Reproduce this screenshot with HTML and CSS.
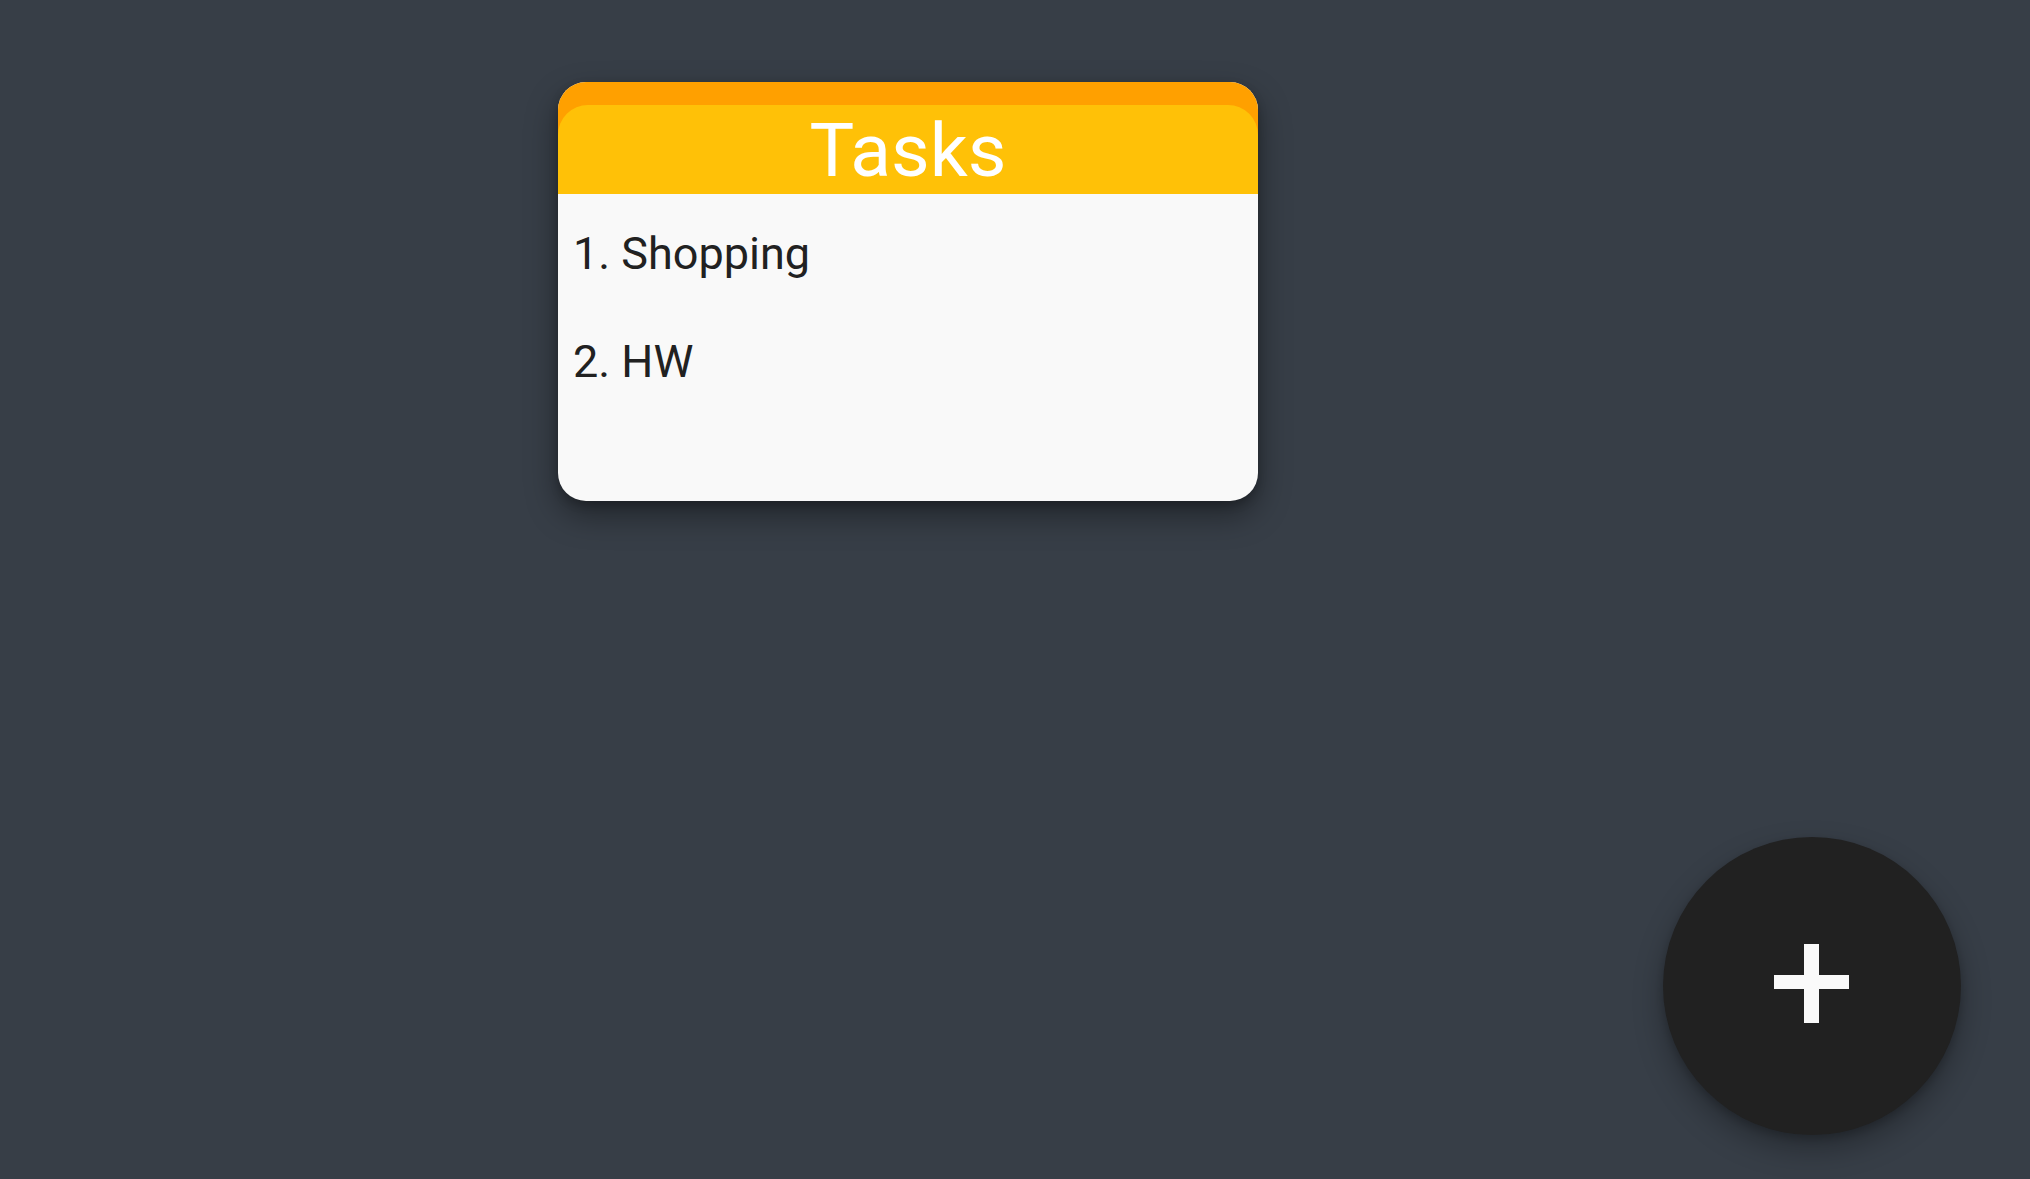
FILE: index.html
```html
<!DOCTYPE html>
<html lang="en">
<head>
<meta charset="utf-8">
<title>Tasks</title>
<link rel="stylesheet" href="styles.css">
</head>
<body>
<main class="board">
  <section class="card">
    <header class="card-header">
      <div class="card-title-bar">
        <h1 class="card-title">Tasks</h1>
      </div>
    </header>
    <ul class="task-list">
      <li class="task-item">1. Shopping</li>
      <li class="task-item">2. HW</li>
    </ul>
  </section>
</main>
<button class="fab" type="button" aria-label="Add">
  <svg class="fab-icon" width="75" height="79" viewBox="0 0 75 79" aria-hidden="true">
    <rect x="0" y="31" width="75" height="14" fill="#fafafa"/>
    <rect x="30" y="0" width="15" height="79" fill="#fafafa"/>
  </svg>
</button>
</body>
</html>
```
FILE: styles.css
```css
html, body {
  margin: 0;
  padding: 0;
  height: 100%;
}
body {
  background: #373e47;
  font-family: Roboto, "Liberation Sans", sans-serif;
  overflow: hidden;
}
.board {
  padding: 82px 0 0 558px;
}
.card {
  width: 700px;
  height: 419px;
  border-radius: 28px;
  overflow: hidden;
  background: #f9f9f9;
  box-shadow: 0 14px 32px rgba(0, 0, 0, 0.4), 0 4px 10px rgba(0, 0, 0, 0.2);
  display: flex;
  flex-direction: column;
}
.card-header {
  background: #ffa000;
  padding-top: 23px;
  height: 112px;
  box-sizing: border-box;
}
.card-title-bar {
  background: #ffc107;
  height: 89px;
  border-radius: 30px 30px 0 0;
}
.card-title {
  margin: 0;
  font-weight: 400;
  font-size: 75px;
  line-height: 90px;
  color: #ffffff;
  text-align: center;
}
.task-list {
  list-style: none;
  margin: 0;
  padding: 6px 0 0 15px;
}
.task-item {
  font-size: 45px;
  line-height: 108px;
  color: #212121;
}
.fab {
  position: fixed;
  right: 69px;
  bottom: 44px;
  width: 298px;
  height: 298px;
  border: none;
  border-radius: 50%;
  background: #212121;
  box-shadow: 0 14px 30px rgba(0, 0, 0, 0.3), 0 4px 10px rgba(0, 0, 0, 0.2);
  padding: 0;
  display: flex;
  align-items: center;
  justify-content: center;
  cursor: pointer;
}
.fab-icon {
  display: block;
  margin-top: -6px;
  margin-left: -1px;
}
```
